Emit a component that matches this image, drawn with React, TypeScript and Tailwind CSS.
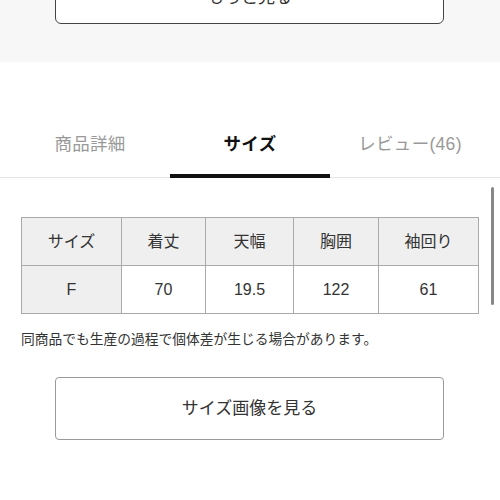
const font = { fontFamily: '"Liberation Sans", "Noto Sans CJK JP", sans-serif' };

const headers = ["サイズ", "着丈", "天幅", "胸囲", "袖回り"];
const values = ["F", "70", "19.5", "122", "61"];
const widths = ["w-[100px]", "w-[84px]", "w-[88px]", "w-[85px]", "w-[100px]"];

export default function App() {
  return (
    <div className="w-[500px] h-[500px] overflow-hidden bg-white relative text-[#333]" style={font}>
      <div className="h-[62px] bg-[#f7f7f7] pl-[55px] pr-[56px] flex flex-col">
        <div className="h-[64px] -mt-[40px] pt-[10px] border border-[#444] rounded-[6px] bg-white flex items-center justify-center">
          <span className="text-[17px] leading-none">もっと見る</span>
        </div>
      </div>

      <div className="mt-[68px] px-[10px] flex border-b border-[#e5e5e5]">
        {["商品詳細", "サイズ", "レビュー(46)"].map((t, i) => (
          <div key={t} className="flex-1 flex flex-col items-center">
            <span
              className={
                "text-[17.5px] leading-[28px] tracking-[0.3px] " +
                (i === 1 ? "font-bold text-[#111]" : "text-[#999]")
              }
            >
              {t}
            </span>
            <div className={"mt-[16px] h-[4px] w-[160px] -mb-[1px] " + (i === 1 ? "bg-[#111]" : "bg-transparent")} />
          </div>
        ))}
      </div>

      <div className="absolute right-[6px] top-[187px] w-[3px] h-[118px] rounded-full bg-[#888]" />

      <div className="px-[21px] pt-[39px]">
        <table className="border-collapse text-[16px]">
          <tbody>
            <tr>
              {headers.map((h, i) => (
                <td
                  key={h}
                  className={widths[i] + " h-[48px] border border-[#aaa] bg-[#efefef] text-center"}
                >
                  {h}
                </td>
              ))}
            </tr>
            <tr>
              {values.map((v, i) => (
                <td
                  key={i}
                  className={
                    widths[i] +
                    " h-[48px] border border-[#aaa] text-center " +
                    (i === 0 ? "bg-[#efefef]" : "bg-white")
                  }
                >
                  {v}
                </td>
              ))}
            </tr>
          </tbody>
        </table>
        <p className="mt-[15px] text-[13.75px] leading-[22px] whitespace-nowrap">
          同商品でも生産の過程で個体差が生じる場合があります。
        </p>
      </div>

      <div className="ml-[55px] mr-[56px] mt-[26px] h-[63px] border border-[#999] rounded-[4px] flex items-center justify-center">
        <span className="text-[17px]">サイズ画像を見る</span>
      </div>
    </div>
  );
}
